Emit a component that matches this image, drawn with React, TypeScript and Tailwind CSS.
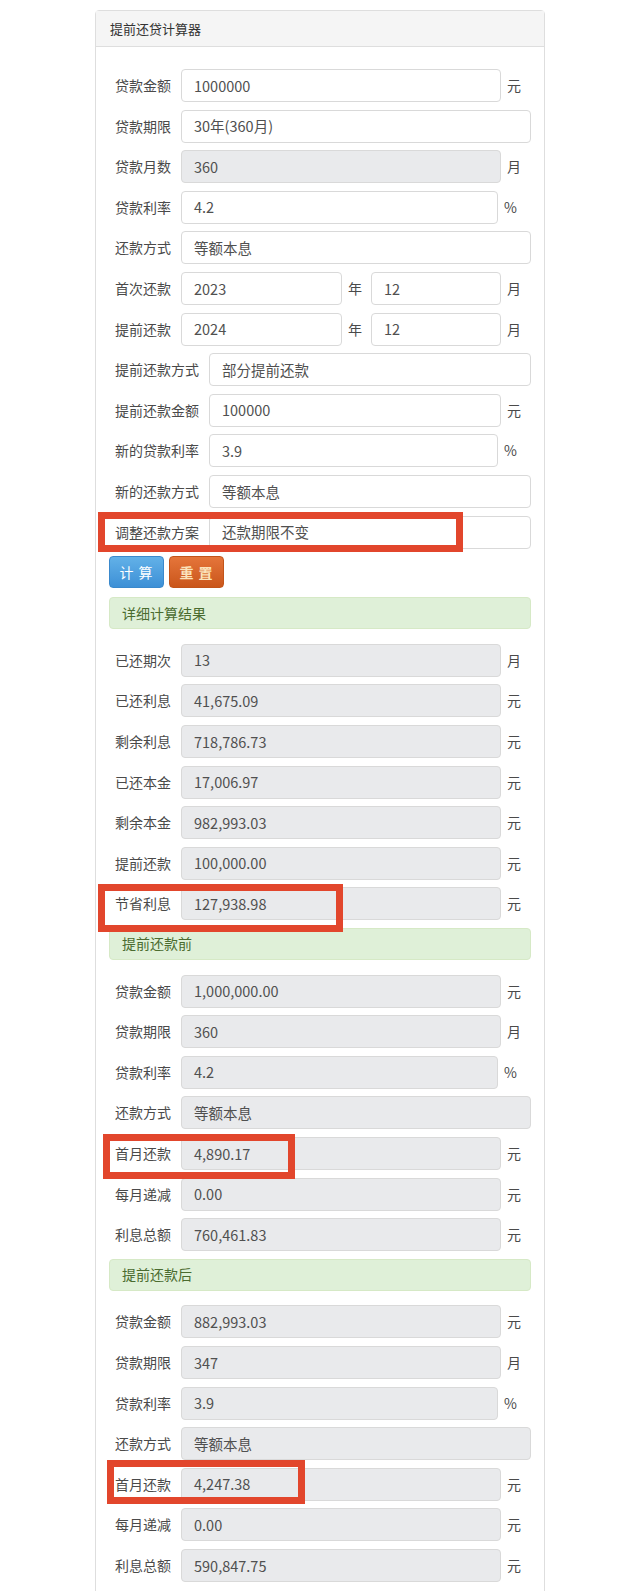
type Row = {
  label: string;
  value: string;
  unit?: string;
  disabled?: boolean;
};

const formRows: Row[] = [
  { label: "贷款金额", value: "1000000", unit: "元" },
  { label: "贷款期限", value: "30年(360月)" },
  { label: "贷款月数", value: "360", unit: "月", disabled: true },
  { label: "贷款利率", value: "4.2", unit: "%" },
  { label: "还款方式", value: "等额本息" },
];

const formRows2: Row[] = [
  { label: "提前还款方式", value: "部分提前还款" },
  { label: "提前还款金额", value: "100000", unit: "元" },
  { label: "新的贷款利率", value: "3.9", unit: "%" },
  { label: "新的还款方式", value: "等额本息" },
  { label: "调整还款方案", value: "还款期限不变" },
];

const sections: { title: string; rows: Row[] }[] = [
  {
    title: "详细计算结果",
    rows: [
      { label: "已还期次", value: "13", unit: "月" },
      { label: "已还利息", value: "41,675.09", unit: "元" },
      { label: "剩余利息", value: "718,786.73", unit: "元" },
      { label: "已还本金", value: "17,006.97", unit: "元" },
      { label: "剩余本金", value: "982,993.03", unit: "元" },
      { label: "提前还款", value: "100,000.00", unit: "元" },
      { label: "节省利息", value: "127,938.98", unit: "元" },
    ],
  },
  {
    title: "提前还款前",
    rows: [
      { label: "贷款金额", value: "1,000,000.00", unit: "元" },
      { label: "贷款期限", value: "360", unit: "月" },
      { label: "贷款利率", value: "4.2", unit: "%" },
      { label: "还款方式", value: "等额本息" },
      { label: "首月还款", value: "4,890.17", unit: "元" },
      { label: "每月递减", value: "0.00", unit: "元" },
      { label: "利息总额", value: "760,461.83", unit: "元" },
    ],
  },
  {
    title: "提前还款后",
    rows: [
      { label: "贷款金额", value: "882,993.03", unit: "元" },
      { label: "贷款期限", value: "347", unit: "月" },
      { label: "贷款利率", value: "3.9", unit: "%" },
      { label: "还款方式", value: "等额本息" },
      { label: "首月还款", value: "4,247.38", unit: "元" },
      { label: "每月递减", value: "0.00", unit: "元" },
      { label: "利息总额", value: "590,847.75", unit: "元" },
    ],
  },
];

const Field = ({ value, disabled, className = "flex-1" }: { value: string; disabled?: boolean; className?: string }) => (
  <div
    className={`${className} h-[33px] min-w-0 flex items-center px-[12px] rounded-[4px] border border-[#d9d9d9] text-[14.5px] text-[#505050] ${
      disabled ? "bg-[#e9eaec]" : "bg-white"
    }`}
  >
    {value}
  </div>
);

const Unit = ({ unit }: { unit: string }) => (
  <span className={`${unit === "%" ? "w-[33px]" : "w-[30px]"} shrink-0 pl-[6px] text-[14px] text-[#4a4a4a]`}>{unit}</span>
);

const Label = ({ text }: { text: string }) => (
  <span className="shrink-0 whitespace-nowrap pl-[6px] pr-[10px] text-[14px] text-[#4a4a4a]">{text}</span>
);

const FormRow = ({ row, disabled }: { row: Row; disabled?: boolean }) => (
  <div className="flex items-center h-[33px]">
    <Label text={row.label} />
    <Field value={row.value} disabled={disabled || row.disabled} />
    {row.unit && <Unit unit={row.unit} />}
  </div>
);

const DateRow = ({ label, year, month }: { label: string; year: string; month: string }) => (
  <div className="flex items-center h-[33px]">
    <Label text={label} />
    <Field value={year} className="w-[161px] shrink-0" />
    <span className="w-[29px] shrink-0 pl-[6px] text-[14px] text-[#4a4a4a]">年</span>
    <Field value={month} />
    <Unit unit="月" />
  </div>
);

const RedBox = ({ className }: { className: string }) => (
  <div className={`absolute border-[7px] border-[#e2462c] pointer-events-none ${className}`} />
);

export default function App() {
  return (
    <div
      className="relative h-[1591px] overflow-hidden bg-white pt-[10px]"
      style={{ fontFamily: '"Noto Sans CJK SC", "Noto Sans", sans-serif' }}
    >
      <div className="w-[450px] mx-auto border border-[#dedede] rounded-t-[4px]">
        <div className="h-[36px] flex items-center px-[14px] bg-[#f5f5f5] border-b border-[#dedede] text-[13px] text-[#333]">
          提前还贷计算器
        </div>
        <div className="px-[13px] pt-[22px] pb-[20px] flex flex-col gap-[7.6px]">
          {formRows.map((r) => (
            <FormRow key={r.label} row={r} />
          ))}
          <DateRow label="首次还款" year="2023" month="12" />
          <DateRow label="提前还款" year="2024" month="12" />
          {formRows2.map((r) => (
            <FormRow key={r.label} row={r} />
          ))}

          <div className="flex gap-[5px] h-[32px] mb-[1.5px]">
            <button className="w-[55px] h-[32px] rounded-[4px] border border-[#3a89cc] bg-gradient-to-b from-[#62b1e8] to-[#3d90d6] text-white text-[14px] tracking-[1px]">
              计 算
            </button>
            <button className="w-[55px] h-[32px] rounded-[4px] border border-[#c2541a] bg-gradient-to-b from-[#e5753a] to-[#ca561a] text-[#fbe3bb] text-[14px] font-bold tracking-[1px]">
              重 置
            </button>
          </div>

          {sections.map((s) => (
            <div key={s.title} className="flex flex-col gap-[7.6px]">
              <div className="h-[32px] mb-[7px] flex items-center px-[12px] rounded-[4px] border border-[#d6e9c6] bg-[#dff0d8] text-[14px] text-[#4a6b2f]">
                {s.title}
              </div>
              {s.rows.map((r) => (
                <FormRow key={r.label} row={r} disabled />
              ))}
            </div>
          ))}
        </div>
      </div>

      <RedBox className="left-[98px] top-[512px] w-[365px] h-[40px]" />
      <RedBox className="left-[98px] top-[884px] w-[245px] h-[48px]" />
      <RedBox className="left-[103px] top-[1134px] w-[192px] h-[45px]" />
      <RedBox className="left-[107px] top-[1460px] w-[198px] h-[44px]" />
    </div>
  );
}
